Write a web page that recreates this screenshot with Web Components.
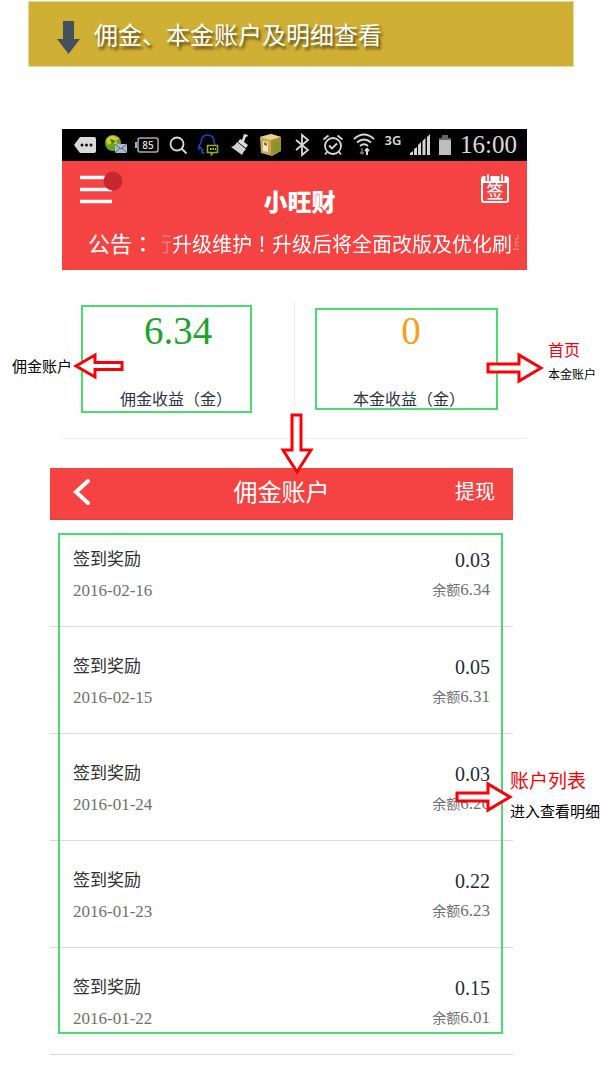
<!DOCTYPE html>
<html lang="zh-CN">
<head>
<meta charset="utf-8">
<meta name="viewport" content="width=device-width, initial-scale=1">
<title>佣金、本金账户及明细查看</title>
<style>
  body { margin: 0; background: #fff; color: #222; font-family: "Liberation Serif", "Noto Sans CJK SC", serif; }
</style>
</head>
<body>
<guide-page></guide-page>

<script>
const define = (name, html, setup) => {
  const template = document.createElement('template');
  template.innerHTML = html;
  customElements.define(name, class extends HTMLElement {
    constructor() {
      super();
      this.attachShadow({ mode: 'open' }).append(template.content.cloneNode(true));
    }
    connectedCallback() { if (setup) setup(this, this.shadowRoot); }
  });
};

/* Gold heading of the guide */
define('guide-banner', `
<style>
  :host { display: block; }
  header { display: flex; align-items: center; gap: 14px; box-sizing: border-box; height: 66px; padding: 0 28px;
    background: #cfb035; border: 1px solid #e8d998; }
  svg { display: block; margin-top: 6px; }
  h1 { margin: 0; font: 400 24px/36px "Noto Sans CJK SC", sans-serif; color: #fff; text-shadow: 2px 3px 3px rgba(50, 35, 0, .75); }
</style>
<header>
  <svg width="23" height="33" viewBox="0 0 23 33" aria-hidden="true"><path d="M6 0h11v18h6L11.500 33 0 18h6z" fill="#42505f"/></svg>
  <h1><slot></slot></h1>
</header>`);

/* Android status bar */
define('status-bar', `
<style>
  :host { display: flex; align-items: center; gap: 7px; height: 32px; padding: 0 8px 0 11px; background: #000; color: #d9d9d9; overflow: hidden; }
  svg { display: block; flex: none; }
  .net { flex: none; align-self: flex-start; width: 20px; font: 600 13px/23px "Noto Sans", sans-serif; text-align: center; }
  time { font: 25px/32px "Liberation Serif", serif; }
  .pct { font: 600 10px "Open Sans", sans-serif; }
</style>
<svg width="24" height="24" viewBox="0 0 24 24"><path d="M7 4h14q2 0 2 2v12q0 2-2 2H7L1 12z" fill="#dadada"/><g fill="#111"><circle cx="9" cy="12" r="1.500"/><circle cx="13.500" cy="12" r="1.500"/><circle cx="18" cy="12" r="1.500"/></g></svg>
<svg width="24" height="24" viewBox="0 0 24 24"><circle cx="9" cy="10" r="8" fill="#69a51f"/><path d="M2 7q3-5 8-4l5 2-3 3 2 4-6-2-4 2z" fill="#d9c43c"/><path d="M6 6l6 2-4 3z" fill="#3b8120"/><rect x="11" y="11" width="12" height="9" fill="#a9bac8"/><path d="M11 11l6 5 6-5M11 20l5-5M23 20l-5-5" fill="none" stroke="#536b80"/></svg>
<svg width="24" height="24" viewBox="0 0 24 24"><rect x="3" y="5" width="20" height="14" rx="2" fill="none" stroke="#aaa" stroke-width="1.500"/><path d="M1 9v6" stroke="#aaa" stroke-width="2"/><text class="pct" x="13" y="16" text-anchor="middle" fill="#ddd">85</text></svg>
<svg width="24" height="24" viewBox="0 0 24 24" fill="none" stroke="#d8d8d8" stroke-width="1.800"><circle cx="11" cy="11" r="6.500"/><path d="M15.500 15.500l5 5"/></svg>
<svg width="24" height="24" viewBox="0 0 24 24" fill="none" stroke-width="1.600"><path d="M8 20H5q-1-1 1-3-2-1-3-3l-1 2q-1-3 2-6 0-8 6.500-8T17 9l1 3" stroke="#1846b8"/><path d="M10.500 12.500h10v7h-4l-2 2v-2h-4z" stroke="#8fae26"/><path d="M13 16h1.500m1 0H17m1 0h1" stroke="#b5cc3c" stroke-width="2"/></svg>
<svg width="24" height="24" viewBox="0 0 24 24"><path d="M16 1l4 1-1 2-1-.5-2 5.500 4 3-2 3-8-6 2-3 2 1z" fill="#ddd"/><path d="M9 9l9 7q-3 3-4 6L3 14q4-1 6-5z" fill="#d0d0d0"/></svg>
<svg width="24" height="24" viewBox="0 0 24 24"><path d="M1 4l11-3 10 3v14l-9 5L2 20z" fill="#c6a953"/><path d="M1 4l11 3 10-3-10-3z" fill="#e5d58c"/><path d="M12 7v16l10-5V4z" fill="#ad873c"/><path d="M4 8l5 1v10l-5-1z" fill="#eee9cb"/><path d="M5 9l3 1v3l-3-1z" fill="#8b7440"/><path d="M14 12q3-5 7-2v8l-6 2z" fill="#789b20"/></svg>
<svg width="24" height="24" viewBox="0 0 24 24" fill="none" stroke="#d8d8d8" stroke-width="1.800"><path d="M6 7l12 10-6 5V2l6 5L6 17"/></svg>
<svg width="24" height="24" viewBox="0 0 24 24" fill="none" stroke="#d8d8d8" stroke-width="1.800"><circle cx="12" cy="13" r="8"/><path d="M2.500 6.500l5-4M21.500 6.500l-5-4M8 12.500l3 3 5-5M6 19l-2 2.500M18 19l2 2.500"/></svg>
<svg width="24" height="24" viewBox="0 0 24 24" fill="none" stroke="#d8d8d8" stroke-width="2"><path d="M2 6q10-9 20 0M5 9.500q7-6 14 0M8 13q4-3.500 8 0"/><path d="M10 15v6m-2-2l2 2 2-2" stroke="#777" stroke-width="1.500"/><path d="M15 22v-6m-2 2l2-2 2 2" stroke-width="2"/></svg>
<span class="net">3G</span>
<svg width="20" height="24" viewBox="0 0 20 24" fill="#d4d4d4"><path d="M0 22v-2l3-2v4zM4 22v-6l3-2v8zM8 22V12l3-3v13zM12.500 22V8l3-3v17zM17 22V4l3-3v21z"/></svg>
<svg width="16" height="24" viewBox="0 0 16 24"><path d="M5 2h6v3h3v17H2V5h3z" fill="#666"/><path d="M2 7h12v15H2z" fill="#bdbdbd"/></svg>
<time>16:00</time>`);

/* Red home header with the scrolling notice */
define('home-header', `
<style>
  :host { display: block; background: #f54343; color: #fff; font-family: "Noto Sans CJK SC", sans-serif; }
  .bar { display: grid; grid-template-columns: 38px 1fr 28px; align-items: start; padding: 10px 18px 0; height: 54px; }
  button { padding: 0; border: 0; background: none; color: inherit; }
  svg { display: block; overflow: visible; }
  .day { font: 500 17px "Noto Sans CJK SC", sans-serif; }
  h2 { margin: 13px 0 0; font: 900 24px/34px "Noto Sans CJK SC", sans-serif; text-align: center; }
  .notice { display: flex; gap: 8px; height: 45px; padding: 0 8px 0 26px; line-height: 38px; white-space: nowrap; }
  .notice b { flex: none; font-weight: 400; font-size: 22px; line-height: 34px; }
  .notice > span { flex: 1; min-width: 0; overflow: hidden; font-size: 20px; text-indent: -10px;
    -webkit-mask-image: linear-gradient(90deg, rgba(0,0,0,.3) 9px, #000 11px, #000 calc(100% - 8px), rgba(0,0,0,.3) calc(100% - 5px)); }
  i { font-style: normal; font-family: "Noto Sans CJK TC", sans-serif; }
</style>
<div class="bar">
  <button type="button" aria-label="菜单"><svg width="38" height="34" viewBox="0 0 38 34"><path d="M0 6.500h32M0 18.500h32M0 30.500h32" stroke="#fff" stroke-width="3.500"/><circle cx="33" cy="10" r="9.500" fill="#c5282f"/></svg></button>
  <h2>小旺财</h2>
  <button type="button" aria-label="签到"><svg width="28" height="34" viewBox="0 0 28 34"><path d="M3 6h22q2 0 2 2v21q0 2-2 2H3q-2 0-2-2V8q0-2 2-2z" fill="none" stroke="#fff" stroke-width="2"/><path d="M1 6h26v6H1z" fill="#fff"/><path d="M7 3v7M21 3v7" stroke="#f54343" stroke-width="5"/><path d="M7 4v5M21 4v5" stroke="#fff" stroke-width="2" stroke-linecap="round"/><text class="day" x="14" y="27" text-anchor="middle" fill="#fff">签</text></svg></button>
</div>
<div class="notice"><b>公告<i lang="zh-Hant">：</i></b><span>行升级维护<i lang="zh-Hant">！</i>升级后将全面改版及优化刷单</span></div>`);

/* One balance: the figure above its caption */
define('balance-figure', `
<style>
  :host { display: flex; flex-direction: column; align-items: center; gap: 31px; }
  strong { font: 400 39px/48px "Liberation Serif", serif; color: var(--figure, #1da32d); }
  span { margin-right: 4px; font: 400 16px/24px "Noto Sans CJK SC", sans-serif; color: #2b3442; }
</style>
<strong><slot name="value"></slot></strong><span><slot></slot></span>`);

/* Green frame round a part of the screen */
define('mark-frame', `
<style>:host { display: block; position: absolute; box-sizing: border-box; border: 2px solid #48dc70; pointer-events: none; }</style>`);

/* Outlined red arrow: dir = left | right | down */
define('mark-arrow', `
<style>
  :host { display: block; position: absolute; }
  svg { display: block; }
  path { fill: #fff; stroke: #fb0007; stroke-width: 3; }
</style>
<svg aria-hidden="true"><path/></svg>`, (host, root) => {
  const shapes = {
    left: [51, 28, 'M3 14L22 3v7.500h27v7H22V25z'],
    right: [58, 32, 'M2 12h31V3l22 13-22 13v-9H2z'],
    down: [34, 62, 'M12 2h9v35h10L17 59 3 37h9z']
  };
  const [w, h, d] = shapes[host.getAttribute('dir')];
  const svg = root.querySelector('svg');
  svg.setAttribute('width', w);
  svg.setAttribute('height', h);
  svg.querySelector('path').setAttribute('d', d);
});

/* Explanatory note beside the screen */
define('mark-note', `
<style>
  :host { display: block; position: absolute; white-space: nowrap; font: 400 15px/24px "Noto Sans CJK SC", sans-serif; color: #000; }
  ::slotted(b) { display: block; font-weight: 400; color: #fb0007; }
</style>
<slot name="head"></slot><slot></slot>`);

/* Title bar of the account screen */
define('account-bar', `
<style>
  :host { display: grid; grid-template-columns: 36px 1fr 40px; align-items: center; box-sizing: border-box; height: 52px; padding: 0 18px 5px 22px;
    background: #f54343; border-bottom: 1px solid #e63c3e; color: #fff; font-family: "Noto Sans CJK SC", sans-serif; }
  h2 { margin: 0; font-size: 24px; line-height: 32px; font-weight: 400; text-align: center; }
  button { padding: 0; border: 0; background: none; color: inherit; font: 400 20px/32px "Noto Sans CJK SC", sans-serif; white-space: nowrap; }
  svg { display: block; }
</style>
<button type="button" aria-label="返回"><svg width="20" height="28" viewBox="0 0 20 28"><path d="M16 4L4 15l12 11" fill="none" stroke="#fff" stroke-width="4" stroke-linecap="round"/></svg></button>
<h2><slot></slot></h2>
<button type="button">提现</button>`);

/* One record of the account */
define('record-row', `
<style>
  :host { display: grid; grid-template-columns: 1fr auto; grid-template-rows: 31px 31px; align-items: center; box-sizing: border-box; height: 107px;
    padding: 24px 23px 0; border-bottom: 1px solid #d9d9d9; font: 17px/24px "Liberation Serif", "Noto Sans CJK SC", serif; color: #707070; }
  .name { color: #303030; }
  .amount { font-size: 20px; color: #1f2b3a; }
  .amount, .rest { text-align: right; }
  small { font-size: 14px; }
</style>
<span class="name">签到奖励</span><span class="amount"><slot name="amount"></slot></span>
<time><slot name="date"></slot></time><span class="rest"><small>余额</small><slot name="rest"></slot></span>`);

define('guide-page', `
<style>
  :host { display: block; padding: 1px 0 19px; }
  guide-banner { margin: 0 26px 0 28px; }
  .home { position: relative; margin: 62px 73px 0 62px; }
  .balances { display: grid; grid-template-columns: 1fr 1px 1fr; height: 168px; border-bottom: 1px solid #eee; }
  .balances balance-figure { padding-top: 37px; }
  .balances i { margin: 32px 0; background: #e8e8e8; }
  .account { position: relative; margin: 29px 87px 0 50px; }
  ul { margin: 0; padding: 0; list-style: none; }
  .f1 { left: 19px; right: 275px; top: 176px; height: 108px; }
  .f2 { left: 253px; right: 29px; top: 179px; height: 102px; }
  .f3 { left: 8px; right: 10px; top: 65px; bottom: 21px; }
  .a1 { left: 11px; top: 223px; }
  .a2 { right: -17px; top: 223px; }
  .a3 { left: 218px; top: 284px; z-index: 1; }
  .a4 { right: 0; top: 313px; }
  .n1 { right: calc(100% - 10px); top: 225px; }
  .n2 { left: calc(100% + 21px); top: 207px; font-size: 12px; }
  .n2 b { font-size: 16px; line-height: 26px; }
  .n4 { left: calc(100% - 3px); top: 295px; line-height: 28px; }
  .n4 b { font-size: 19px; line-height: 34px; }
</style>
<guide-banner>佣金、本金账户及明细查看</guide-banner>
<section class="home">
  <status-bar></status-bar>
  <home-header></home-header>
  <div class="balances">
    <balance-figure><span slot="value">6.34</span>佣金收益（金）</balance-figure>
    <i></i>
    <balance-figure style="--figure:#f5a11d"><span slot="value">0</span>本金收益（金）</balance-figure>
  </div>
  <mark-frame class="f1"></mark-frame>
  <mark-frame class="f2"></mark-frame>
  <mark-arrow class="a1" dir="left"></mark-arrow>
  <mark-note class="n1">佣金账户</mark-note>
  <mark-arrow class="a2" dir="right"></mark-arrow>
  <mark-note class="n2"><b slot="head">首页</b>本金账户</mark-note>
  <mark-arrow class="a3" dir="down"></mark-arrow>
</section>
<section class="account">
  <account-bar>佣金账户</account-bar>
  <ul></ul>
  <mark-frame class="f3"></mark-frame>
  <mark-arrow class="a4" dir="right"></mark-arrow>
  <mark-note class="n4"><b slot="head">账户列表</b>进入查看明细</mark-note>
</section>`, (host, root) => {
  const records = [
    ['2016-02-16', '0.03', '6.34'],
    ['2016-02-15', '0.05', '6.31'],
    ['2016-01-24', '0.03', '6.26'],
    ['2016-01-23', '0.22', '6.23'],
    ['2016-01-22', '0.15', '6.01']
  ];
  root.querySelector('ul').innerHTML = records.map(([date, amount, rest]) =>
    `<li><record-row><span slot="date">${date}</span><span slot="amount">${amount}</span><span slot="rest">${rest}</span></record-row></li>`).join('');
});
</script>
</body>
</html>
